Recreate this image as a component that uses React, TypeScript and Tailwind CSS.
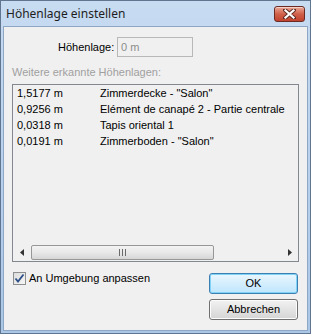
import React from "react";

const rows = [
  { h: "1,5177 m", name: 'Zimmerdecke - "Salon"' },
  { h: "0,9256 m", name: "Elément de canapé 2 - Partie centrale" },
  { h: "0,0318 m", name: "Tapis oriental 1" },
  { h: "0,0191 m", name: 'Zimmerboden - "Salon"' },
];

function CloseButton() {
  return (
    <div className="flex h-[16px] w-[31px] items-center justify-center rounded-[3px] border border-[#6b2b22] bg-gradient-to-b from-[#e9a898] via-[#d0604a] to-[#c0432e] shadow-[inset_0_1px_0_rgba(255,255,255,0.5)]">
      <svg width="13" height="10" viewBox="0 0 13 10">
        <path d="M2 1 L11 9 M11 1 L2 9" stroke="#5a2a24" strokeWidth="4" strokeLinecap="round" />
        <path d="M2.5 1.5 L10.5 8.5 M10.5 1.5 L2.5 8.5" stroke="#ffffff" strokeWidth="2.2" strokeLinecap="square" />
      </svg>
    </div>
  );
}

function Arrow({ dir }: { dir: "left" | "right" }) {
  return (
    <div className="flex w-[17px] items-center justify-center">
      <svg width="4" height="7" viewBox="0 0 4 7">
        {dir === "left" ? <path d="M4 0 L0 3.5 L4 7 Z" fill="#333" /> : <path d="M0 0 L4 3.5 L0 7 Z" fill="#333" />}
      </svg>
    </div>
  );
}

function Checkbox() {
  return (
    <div className="flex h-[13px] w-[13px] shrink-0 items-center justify-center border border-[#8e8f8f] bg-gradient-to-br from-[#dcdcdc] to-[#f6f6f6]">
      <svg width="11" height="11" viewBox="0 0 11 11">
        <path d="M1.5 5.5 L4 8.5 L9.5 1.5" stroke="#2b4f86" strokeWidth="1.8" fill="none" />
      </svg>
    </div>
  );
}

export default function App() {
  return (
    <div
      className="flex h-[334px] w-[311px] flex-col border border-[#5f7590] bg-gradient-to-b from-[#c7dbf1] to-[#aac7e8] text-[11px] leading-[13px] text-black"
      style={{ fontFamily: '"Liberation Sans", Arial, sans-serif' }}
    >
      {/* Titelleiste */}
      <div className="flex h-[25px] shrink-0 items-center justify-between pl-[5px] pr-[5px]">
        <span className="text-[12px] leading-[16px] text-[#1e1e1e]" style={{ fontFamily: '"Noto Sans", "Open Sans", sans-serif' }}>
          Höhenlage einstellen
        </span>
        <CloseButton />
      </div>

      <div className="mx-[2px] mb-[2px] flex flex-1 flex-col border border-[#8ea7c4] bg-[#f0f0f0] px-[8px]">
        <div className="mt-[10px] flex items-center pl-[46px]">
          <span className="w-[52px] whitespace-nowrap">Höhenlage:</span>
          <div className="ml-[7px] flex h-[20px] w-[76px] items-center border border-[#b8b8b8] px-[3px] text-[#8d8d8d]">
            0 m
          </div>
        </div>

        <div className="mt-[9px] text-[#a0a0a0]">Weitere erkannte Höhenlagen:</div>

        <div className="mt-[5px] flex h-[178px] w-[287px] flex-col border border-[#828790] bg-[#f0f0f0]">
          <div className="flex-1">
            {rows.map((r) => (
              <div key={r.h} className="flex h-[16px] items-center">
                <span className="w-[87px] pl-[4px]">{r.h}</span>
                <span className="whitespace-nowrap">{r.name}</span>
              </div>
            ))}
          </div>
          {/* horizontale Scrollbar */}
          <div className="flex h-[17px] bg-[#f0f0f0] py-[1px]">
            <Arrow dir="left" />
            <div className="ml-[1px] flex w-[183px] items-center justify-center rounded-[2px] border border-[#979797] bg-gradient-to-b from-[#f3f3f3] via-[#e8e8e8] to-[#d6d6d6]">
              <svg width="7" height="7" viewBox="0 0 7 7">
                <path d="M0.5 0 V7 M3.5 0 V7 M6.5 0 V7" stroke="#6a6a6a" strokeWidth="1" />
              </svg>
            </div>
            <div className="flex-1" />
            <Arrow dir="right" />
          </div>
        </div>

        <div className="mt-[10px] flex justify-between">
          <div className="flex h-[13px] items-center gap-[3px] pl-[1px]">
            <Checkbox />
            <span className="whitespace-nowrap">An Umgebung anpassen</span>
          </div>
          <div className="mr-[1px] mt-[1px] flex flex-col gap-[5px]">
            <div className="flex h-[21px] w-[89px] items-center justify-center rounded-[3px] border border-[#3c7fb1] bg-gradient-to-b from-[#eaf6fd] to-[#bee6fd] shadow-[inset_0_0_0_1px_#7fd3f8]">
              OK
            </div>
            <div className="flex h-[21px] w-[89px] items-center justify-center rounded-[3px] border border-[#707070] bg-gradient-to-b from-[#f2f2f2] to-[#d5d5d5] shadow-[inset_0_0_0_1px_#fcfcfc]">
              Abbrechen
            </div>
          </div>
        </div>
      </div>
    </div>
  );
}
